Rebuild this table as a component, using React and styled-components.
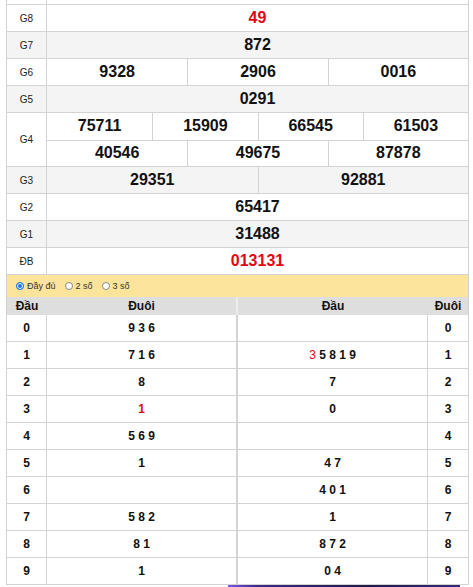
import styled, { createGlobalStyle } from "styled-components";

const GlobalStyle = createGlobalStyle`
  html, body {
    margin: 0;
    padding: 0;
    background: #fff;
    font-family: "Liberation Sans", Arial, sans-serif;
  }
`;

const line = "#d3d3d3";

const Page = styled.div`
  width: 473px;
  padding-left: 6px;
  box-sizing: border-box;
`;

const Board = styled.div`
  width: 463px;
  border-left: 1px solid ${line};
  border-right: 1px solid ${line};
  box-sizing: border-box;
`;

const Row = styled.div`
  display: grid;
  grid-template-columns: 40px 1fr;
  height: ${(p) => p.$h || 27}px;
  box-sizing: border-box;
  border-bottom: 1px solid ${line};
  background: ${(p) => (p.$alt ? "#f4f4f4" : "#fff")};
`;

const Label = styled.div`
  display: flex;
  align-items: center;
  justify-content: center;
  border-right: 1px solid ${line};
  font-size: 10px;
  color: #222;
`;

const Values = styled.div`
  display: grid;
  grid-template-rows: repeat(${(p) => p.$rows || 1}, 1fr);
`;

const Line = styled.div`
  display: grid;
  grid-template-columns: repeat(${(p) => p.$n}, 1fr);
  & + & {
    border-top: 1px solid ${line};
  }
`;

const Num = styled.div`
  display: flex;
  align-items: center;
  justify-content: center;
  font-size: 16px;
  font-weight: bold;
  color: ${(p) => (p.$red ? "#e30613" : "#111")};
  & + & {
    border-left: 1px solid ${line};
  }
`;

const Options = styled.div`
  display: flex;
  align-items: center;
  gap: 9px;
  height: 22px;
  padding-left: 9px;
  background: #fde49b;
  font-size: 9px;
  color: #333;
`;

const Option = styled.label`
  display: flex;
  align-items: center;
  gap: 3px;
`;

const Dot = styled.span`
  width: 8px;
  height: 8px;
  border-radius: 50%;
  box-sizing: border-box;
  border: 1px solid ${(p) => (p.$on ? "#1a73e8" : "#8a8a8a")};
  background: ${(p) => (p.$on ? "#1a73e8" : "#fff")};
  box-shadow: ${(p) => (p.$on ? "inset 0 0 0 1px #fff" : "none")};
`;

const Grid = styled.div`
  display: grid;
  grid-template-columns: 40px 191px 190px 40px;
  height: ${(p) => (p.$head ? 18 : 27)}px;
  box-sizing: border-box;
  background: ${(p) => (p.$head ? "#dedede" : "#fff")};
  border-bottom: ${(p) => (p.$head ? "none" : `1px solid ${line}`)};
`;

const Cell = styled.div`
  display: flex;
  align-items: center;
  justify-content: center;
  font-size: 12px;
  font-weight: bold;
  color: #111;
  white-space: pre;
  border-right: ${(p) => p.$edge || "none"};
`;

const Hot = styled.span`
  color: #e30613;
  font-weight: ${(p) => (p.$thin ? "normal" : "bold")};
`;

const Banner = styled.div`
  margin-left: 222px;
  width: 232px;
  height: 8px;
  background: linear-gradient(90deg, #7d58e8 0%, #3b2a86 12%, #1f1a4a 60%, #352a78 100%);
`;

const prizes = [
  { label: "G8", lines: [["49"]], red: true },
  { label: "G7", lines: [["872"]] },
  { label: "G6", lines: [["9328", "2906", "0016"]] },
  { label: "G5", lines: [["0291"]] },
  { label: "G4", lines: [["75711", "15909", "66545", "61503"], ["40546", "49675", "87878"]] },
  { label: "G3", lines: [["29351", "92881"]] },
  { label: "G2", lines: [["65417"]] },
  { label: "G1", lines: [["31488"]] },
  { label: "ĐB", lines: [["013131"]], red: true },
];

const heads = [
  ["9 3 6", ""],
  ["7 1 6", <><Hot $thin>3</Hot> 5 8 1 9</>],
  ["8", "7"],
  [<Hot>1</Hot>, "0"],
  ["5 6 9", ""],
  ["1", "4 7"],
  ["", "4 0 1"],
  ["5 8 2", "1"],
  ["8 1", "8 7 2"],
  ["1", "0 4"],
];

export default function App() {
  return (
    <>
      <GlobalStyle />
      <Page>
        <Board>
          <Row $h={5}>
            <Label />
            <Values />
          </Row>
          {prizes.map((p, i) => (
            <Row key={p.label} $alt={i % 2 === 1} $h={27 * p.lines.length}>
              <Label>{p.label}</Label>
              <Values $rows={p.lines.length}>
                {p.lines.map((nums, j) => (
                  <Line key={j} $n={nums.length}>
                    {nums.map((n) => (
                      <Num key={n} $red={p.red}>
                        {n}
                      </Num>
                    ))}
                  </Line>
                ))}
              </Values>
            </Row>
          ))}
          <Options>
            <Option>
              <Dot $on />
              Đầy đủ
            </Option>
            <Option>
              <Dot />2 số
            </Option>
            <Option>
              <Dot />3 số
            </Option>
          </Options>
          <Grid $head>
            <Cell>Đầu</Cell>
            <Cell $edge="2px solid #ececec">Đuôi</Cell>
            <Cell>Đầu</Cell>
            <Cell>Đuôi</Cell>
          </Grid>
          {heads.map(([tail, head], i) => (
            <Grid key={i}>
              <Cell $edge={`1px solid ${line}`}>{i}</Cell>
              <Cell $edge={`2px solid ${line}`}>{tail}</Cell>
              <Cell $edge={`1px solid ${line}`}>{head}</Cell>
              <Cell>{i}</Cell>
            </Grid>
          ))}
        </Board>
        <Banner />
      </Page>
    </>
  );
}
